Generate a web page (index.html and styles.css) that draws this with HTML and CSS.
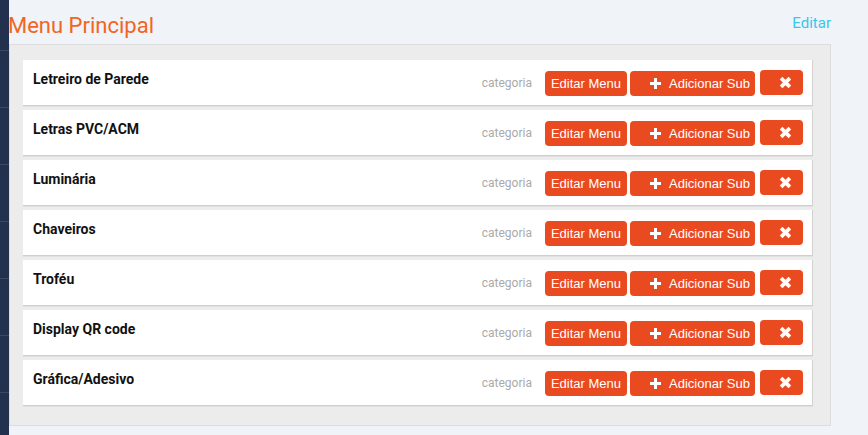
FILE: index.html
```html
<!DOCTYPE html>
<html lang="pt-BR">
<head>
<meta charset="utf-8">
<title>Menu Principal</title>
<link rel="stylesheet" href="styles.css">
</head>
<body>
<div class="app">
  <aside class="sidebar">
    <div class="side-item first"></div>
    <div class="side-item"></div>
    <div class="side-item"></div>
    <div class="side-item"></div>
    <div class="side-item"></div>
    <div class="side-item"></div>
    <div class="side-item"></div>
  </aside>
  <main class="content">
    <header class="header">
      <h1 class="title">Menu Principal</h1>
      <a class="edit-link">Editar</a>
    </header>
    <section class="panel">
      <div class="row">
        <span class="name">Letreiro de Parede</span>
        <div class="actions">
          <span class="cat">categoria</span>
          <a class="btn btn-edit">Editar Menu</a>
          <a class="btn btn-add"><svg class="ico-plus" viewBox="0 0 11 11"><path d="M5.5 0v11M0 5.5h11"/></svg>Adicionar Sub</a>
          <a class="btn btn-del"><svg class="ico-x" viewBox="0 0 10 10"><path d="M1 1l8 8M9 1l-8 8"/></svg></a>
        </div>
      </div>
      <div class="row">
        <span class="name">Letras PVC/ACM</span>
        <div class="actions">
          <span class="cat">categoria</span>
          <a class="btn btn-edit">Editar Menu</a>
          <a class="btn btn-add"><svg class="ico-plus" viewBox="0 0 11 11"><path d="M5.5 0v11M0 5.5h11"/></svg>Adicionar Sub</a>
          <a class="btn btn-del"><svg class="ico-x" viewBox="0 0 10 10"><path d="M1 1l8 8M9 1l-8 8"/></svg></a>
        </div>
      </div>
      <div class="row">
        <span class="name">Luminária</span>
        <div class="actions">
          <span class="cat">categoria</span>
          <a class="btn btn-edit">Editar Menu</a>
          <a class="btn btn-add"><svg class="ico-plus" viewBox="0 0 11 11"><path d="M5.5 0v11M0 5.5h11"/></svg>Adicionar Sub</a>
          <a class="btn btn-del"><svg class="ico-x" viewBox="0 0 10 10"><path d="M1 1l8 8M9 1l-8 8"/></svg></a>
        </div>
      </div>
      <div class="row">
        <span class="name">Chaveiros</span>
        <div class="actions">
          <span class="cat">categoria</span>
          <a class="btn btn-edit">Editar Menu</a>
          <a class="btn btn-add"><svg class="ico-plus" viewBox="0 0 11 11"><path d="M5.5 0v11M0 5.5h11"/></svg>Adicionar Sub</a>
          <a class="btn btn-del"><svg class="ico-x" viewBox="0 0 10 10"><path d="M1 1l8 8M9 1l-8 8"/></svg></a>
        </div>
      </div>
      <div class="row">
        <span class="name">Troféu</span>
        <div class="actions">
          <span class="cat">categoria</span>
          <a class="btn btn-edit">Editar Menu</a>
          <a class="btn btn-add"><svg class="ico-plus" viewBox="0 0 11 11"><path d="M5.5 0v11M0 5.5h11"/></svg>Adicionar Sub</a>
          <a class="btn btn-del"><svg class="ico-x" viewBox="0 0 10 10"><path d="M1 1l8 8M9 1l-8 8"/></svg></a>
        </div>
      </div>
      <div class="row">
        <span class="name">Display QR code</span>
        <div class="actions">
          <span class="cat">categoria</span>
          <a class="btn btn-edit">Editar Menu</a>
          <a class="btn btn-add"><svg class="ico-plus" viewBox="0 0 11 11"><path d="M5.5 0v11M0 5.5h11"/></svg>Adicionar Sub</a>
          <a class="btn btn-del"><svg class="ico-x" viewBox="0 0 10 10"><path d="M1 1l8 8M9 1l-8 8"/></svg></a>
        </div>
      </div>
      <div class="row">
        <span class="name">Gráfica/Adesivo</span>
        <div class="actions">
          <span class="cat">categoria</span>
          <a class="btn btn-edit">Editar Menu</a>
          <a class="btn btn-add"><svg class="ico-plus" viewBox="0 0 11 11"><path d="M5.5 0v11M0 5.5h11"/></svg>Adicionar Sub</a>
          <a class="btn btn-del"><svg class="ico-x" viewBox="0 0 10 10"><path d="M1 1l8 8M9 1l-8 8"/></svg></a>
        </div>
      </div>
    </section>
  </main>
</div>
</body>
</html>
```
FILE: styles.css
```css
* { box-sizing: border-box; }
html, body { margin: 0; padding: 0; }
body {
  font-family: Roboto, "Liberation Sans", sans-serif;
  background: #f0f3f8;
  width: 868px;
  height: 435px;
  overflow: hidden;
}
.app {
  display: flex;
  height: 435px;
}
.sidebar {
  width: 9px;
  flex: none;
  background: #22314e;
  display: flex;
  flex-direction: column;
}
.side-item {
  height: 57px;
  flex: none;
  border-bottom: 1px solid #3b4763;
}
.side-item.first { height: 51px; }
.content {
  flex: 1;
  padding-right: 37px;
  background: #f0f3f8;
}
.header {
  height: 44px;
  display: flex;
  justify-content: space-between;
  align-items: flex-start;
}
.title {
  margin: 0 0 0 -1px;
  padding-top: 13px;
  font-size: 22px;
  font-weight: 400;
  color: #f26522;
  line-height: normal;
}
.edit-link {
  padding-top: 14px;
  font-size: 15px;
  color: #38c6ea;
  line-height: normal;
}
.panel {
  background: #ececec;
  border: 1px solid #dcdcdc;
  padding: 15px 17px 19px 13px;
}
.row {
  display: flex;
  justify-content: space-between;
  align-items: flex-start;
  height: 46px;
  background: #fff;
  border-right: 1px solid #d2d2d2;
  border-bottom: 1px solid #cfcfcf;
  box-shadow: 0 1px 0 #e0e0e0;
  margin-bottom: 4px;
  padding: 0 9px 0 10px;
}
.row:last-child { margin-bottom: 0; }
.name {
  padding-top: 9px;
  line-height: 21px;
  font-size: 14px;
  font-weight: 700;
  color: #111;
}
.actions {
  display: flex;
  align-items: flex-start;
  margin-top: 11px;
}
.cat {
  font-size: 12px;
  color: #aaaaaa;
  line-height: 25px;
  margin-right: 13px;
}
.btn {
  display: flex;
  align-items: center;
  height: 25px;
  border-radius: 4px;
  background: #e94a20;
  color: #fff;
  font-family: "Liberation Sans", Arial, sans-serif;
  font-size: 13px;
  white-space: nowrap;
}
.btn-edit {
  padding: 0 6px;
  margin-right: 3px;
}
.btn-add {
  padding: 0 5px 0 20px;
  margin-right: 5px;
}
.btn-del {
  width: 43px;
  padding-left: 20px;
  margin-top: -1px;
}
.ico-plus {
  width: 11px;
  height: 11px;
  margin-right: 8px;
  fill: none;
  stroke: #fff;
  stroke-width: 3;
}
.ico-x {
  width: 11px;
  height: 11px;
  overflow: visible;
  fill: none;
  stroke: #fff;
  stroke-width: 3.4;
}
```
